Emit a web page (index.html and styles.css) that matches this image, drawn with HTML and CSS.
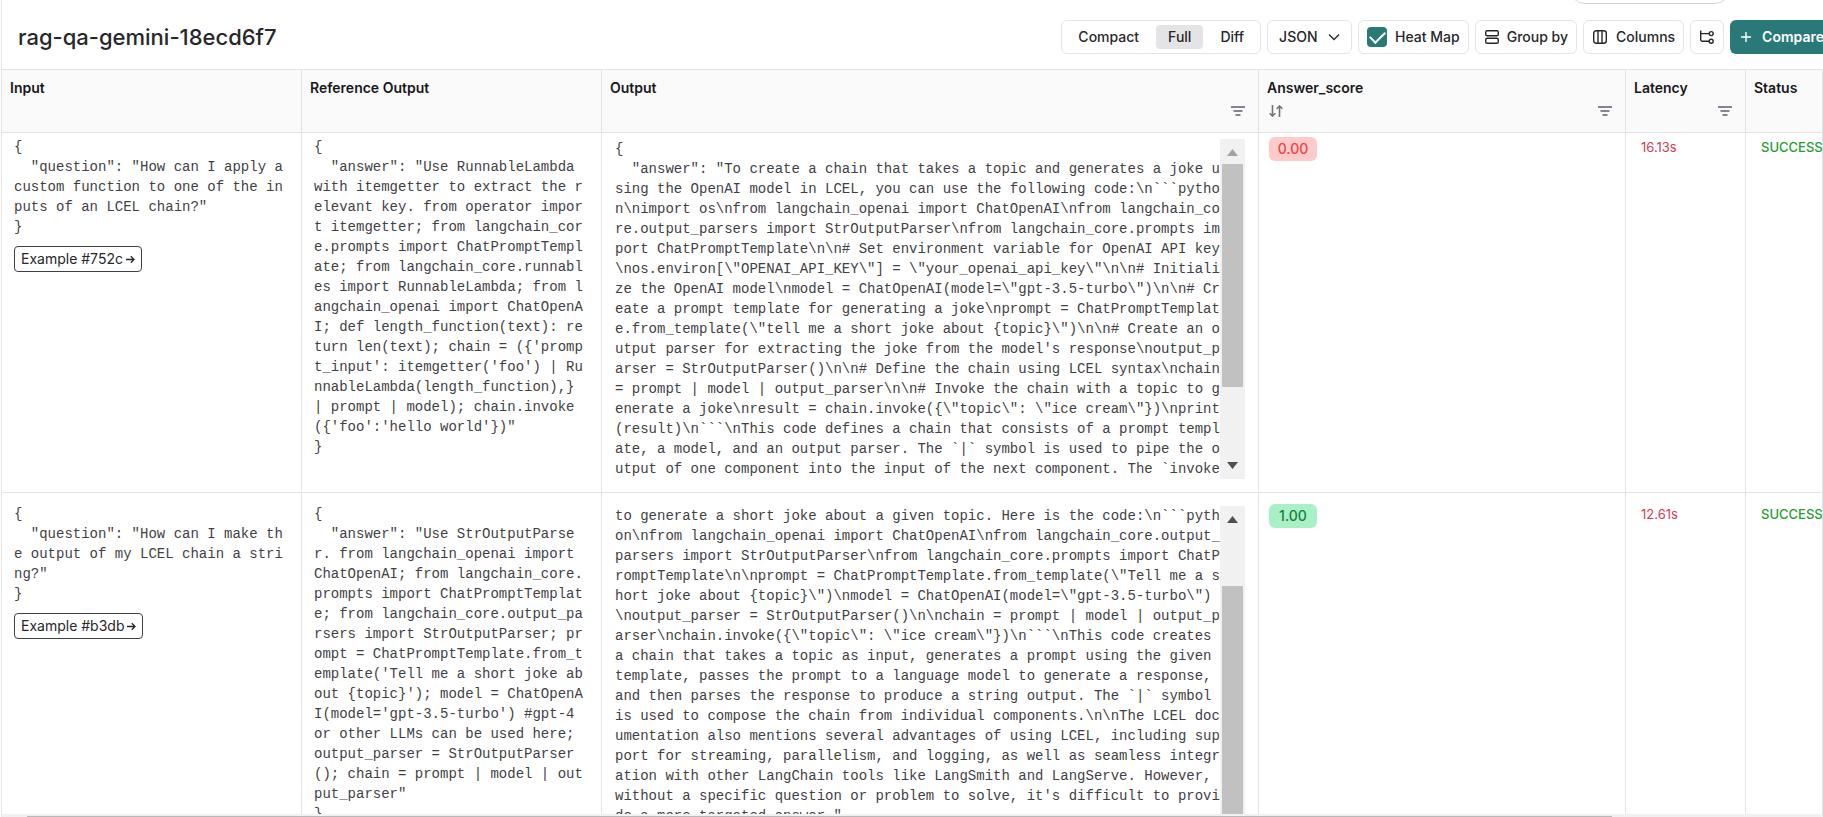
FILE: index.html
```html
<!DOCTYPE html>
<html lang="en">
<head>
<meta charset="utf-8">
<title>rag-qa-gemini-18ecd6f7</title>
<link rel="stylesheet" href="styles.css">
</head>
<body>
<main class="page">
  <div class="topbar"><button class="pill" type="button" aria-label="More"></button></div>
  <header class="header">
    <h1 class="title">rag-qa-gemini-18ecd6f7</h1>
    <div class="toolbar">
      <div class="segmented">
        <button class="segment" type="button">Compact</button>
        <button class="segment segment-active" type="button">Full</button>
        <button class="segment" type="button">Diff</button>
      </div>
      <div class="box select-box">
        <select class="select" aria-label="Format"><option>JSON</option></select>
        <svg class="chevron" width="12" height="8" viewBox="0 0 12 8"><path d="M1 1.5 6 6.5l5-5"/></svg>
      </div>
      <label class="box heat"><input class="check" type="checkbox" checked>Heat Map</label>
      <button class="box group" type="button">
        <svg class="icon" width="16" height="16" viewBox="0 0 16 16"><rect x="1.7" y="1.7" width="12.6" height="5" rx="1.5"/><rect x="1.7" y="9.3" width="12.6" height="5" rx="1.5"/></svg>
        Group by
      </button>
      <button class="box columns" type="button">
        <svg class="icon" width="16" height="16" viewBox="0 0 16 16"><rect x="1.7" y="1.7" width="12.6" height="12.6" rx="2.5"/><path d="M6 1.7v12.6M10 1.7v12.6"/></svg>
        Columns
      </button>
      <button class="box tree" type="button" aria-label="Trace view">
        <svg class="icon" width="16" height="16" viewBox="0 0 16 16"><path d="M1.7 1.5v9.3a1.5 1.5 0 0 0 1.5 1.5H10M1.7 4.6H10"/><circle cx="12.2" cy="4.6" r="2"/><circle cx="12.2" cy="12.2" r="2"/></svg>
      </button>
      <button class="compare" type="button">
        <svg class="plus" width="12" height="12" viewBox="0 0 12 12"><path d="M6 1v10M1 6h10"/></svg>
        Compare
      </button>
    </div>
  </header>
  <div class="table-wrap">
    <table class="table">
      <colgroup><col class="col-text"><col class="col-text"><col><col class="col-score"><col class="col-latency"><col class="col-status"></colgroup>
      <thead>
        <tr>
          <th scope="col">Input</th>
          <th scope="col">Reference Output</th>
          <th scope="col">Output
            <div class="tools"><span></span><button class="tool" type="button" aria-label="Filter output"><svg width="14" height="10" viewBox="0 0 14 10"><path d="M0 1h14M2.500 5h9M4.500 9h5"/></svg></button></div>
          </th>
          <th scope="col">Answer_score
            <div class="tools"><button class="tool" type="button" aria-label="Sort by score"><svg class="sort" width="14" height="12" viewBox="0 0 14 12"><path d="M3.500 0v11M.7 8.200l2.800 2.800 2.800-2.800M10.500 12V1M7.700 3.800 10.500 1l2.800 2.800"/></svg></button><button class="tool" type="button" aria-label="Filter score"><svg width="14" height="10" viewBox="0 0 14 10"><path d="M0 1h14M2.500 5h9M4.500 9h5"/></svg></button></div>
          </th>
          <th scope="col">Latency
            <div class="tools"><span></span><button class="tool" type="button" aria-label="Filter latency"><svg width="14" height="10" viewBox="0 0 14 10"><path d="M0 1h14M2.500 5h9M4.500 9h5"/></svg></button></div>
          </th>
          <th scope="col">Status</th>
        </tr>
      </thead>
      <tbody>
        <tr class="row-first">
          <td><pre class="code">{
  "question": "How can I apply a
custom function to one of the in
puts of an LCEL chain?"
}</pre><a class="example" href="#752c">Example #752c <svg width="9" height="9" viewBox="0 0 9 9"><path d="M0 4.500h8M4.800 1.300 8 4.500 4.800 7.700"/></svg></a></td>
          <td><pre class="code">{
  "answer": "Use RunnableLambda
with itemgetter to extract the r
elevant key. from operator impor
t itemgetter; from langchain_cor
e.prompts import ChatPromptTempl
ate; from langchain_core.runnabl
es import RunnableLambda; from l
angchain_openai import ChatOpenA
I; def length_function(text): re
turn len(text); chain = ({'promp
t_input': itemgetter('foo') | Ru
nnableLambda(length_function),}
| prompt | model); chain.invoke
({'foo':'hello world'})"
}</pre></td>
          <td class="output"><div class="scroller"><pre class="code">{
  "answer": "To create a chain that takes a topic and generates a joke u
sing the OpenAI model in LCEL, you can use the following code:\n```pytho
n\nimport os\nfrom langchain_openai import ChatOpenAI\nfrom langchain_co
re.output_parsers import StrOutputParser\nfrom langchain_core.prompts im
port ChatPromptTemplate\n\n# Set environment variable for OpenAI API key
\nos.environ[\"OPENAI_API_KEY\"] = \"your_openai_api_key\"\n\n# Initiali
ze the OpenAI model\nmodel = ChatOpenAI(model=\"gpt-3.5-turbo\")\n\n# Cr
eate a prompt template for generating a joke\nprompt = ChatPromptTemplat
e.from_template(\"tell me a short joke about {topic}\")\n\n# Create an o
utput parser for extracting the joke from the model's response\noutput_p
arser = StrOutputParser()\n\n# Define the chain using LCEL syntax\nchain
= prompt | model | output_parser\n\n# Invoke the chain with a topic to g
enerate a joke\nresult = chain.invoke({\"topic\": \"ice cream\"})\nprint
(result)\n```\nThis code defines a chain that consists of a prompt templ
ate, a model, and an output parser. The `|` symbol is used to pipe the o
utput of one component into the input of the next component. The `invoke</pre><div class="bar"><svg class="arrow arrow-off" width="11" height="8" viewBox="0 0 11 8"><path d="M0 8 5.500 1 11 8z"/></svg><div class="track"><div class="thumb thumb-start"></div></div><svg class="arrow" width="11" height="8" viewBox="0 0 11 8"><path d="M0 0 5.500 7 11 0z"/></svg></div></div></td>
          <td class="score"><span class="badge badge-low">0.00</span></td>
          <td class="metric latency">16.13s</td>
          <td class="metric status">SUCCESS</td>
        </tr>
        <tr>
          <td><pre class="code">{
  "question": "How can I make th
e output of my LCEL chain a stri
ng?"
}</pre><a class="example" href="#b3db">Example #b3db <svg width="9" height="9" viewBox="0 0 9 9"><path d="M0 4.500h8M4.800 1.300 8 4.500 4.800 7.700"/></svg></a></td>
          <td><pre class="code">{
  "answer": "Use StrOutputParse
r. from langchain_openai import
ChatOpenAI; from langchain_core.
prompts import ChatPromptTemplat
e; from langchain_core.output_pa
rsers import StrOutputParser; pr
ompt = ChatPromptTemplate.from_t
emplate('Tell me a short joke ab
out {topic}'); model = ChatOpenA
I(model='gpt-3.5-turbo') #gpt-4
or other LLMs can be used here;
output_parser = StrOutputParser
(); chain = prompt | model | out
put_parser"
}</pre></td>
          <td class="output"><div class="scroller"><pre class="code">to generate a short joke about a given topic. Here is the code:\n```pyth
on\nfrom langchain_openai import ChatOpenAI\nfrom langchain_core.output_
parsers import StrOutputParser\nfrom langchain_core.prompts import ChatP
romptTemplate\n\nprompt = ChatPromptTemplate.from_template(\"Tell me a s
hort joke about {topic}\")\nmodel = ChatOpenAI(model=\"gpt-3.5-turbo\")
\noutput_parser = StrOutputParser()\n\nchain = prompt | model | output_p
arser\nchain.invoke({\"topic\": \"ice cream\"})\n```\nThis code creates
a chain that takes a topic as input, generates a prompt using the given
template, passes the prompt to a language model to generate a response,
and then parses the response to produce a string output. The `|` symbol
is used to compose the chain from individual components.\n\nThe LCEL doc
umentation also mentions several advantages of using LCEL, including sup
port for streaming, parallelism, and logging, as well as seamless integr
ation with other LangChain tools like LangSmith and LangServe. However,
without a specific question or problem to solve, it's difficult to provi
de a more targeted answer."
}</pre><div class="bar"><svg class="arrow" width="11" height="8" viewBox="0 0 11 8"><path d="M0 8 5.500 1 11 8z"/></svg><div class="track track-end"><div class="thumb thumb-end"></div></div><svg class="arrow arrow-off" width="11" height="8" viewBox="0 0 11 8"><path d="M0 0 5.500 7 11 0z"/></svg></div></div></td>
          <td class="score"><span class="badge badge-high">1.00</span></td>
          <td class="metric latency">12.61s</td>
          <td class="metric status">SUCCESS</td>
        </tr>
      </tbody>
    </table>
  </div>
  <div class="hscroll"><div class="hthumb"></div></div>
</main>
</body>
</html>
```

FILE: styles.css
```css
* { box-sizing: border-box; }
body { margin: 0; background: #fff; color: #27272a; font-family: Inter, sans-serif; font-size: 14px; line-height: 20px; }
button, select, input { font: inherit; color: inherit; margin: 0; }
svg { fill: none; stroke: currentColor; flex: none; display: block; }

.page { height: 100vh; display: flex; flex-direction: column; overflow: hidden; margin-left: 1px; border-left: 1px solid #e4e4e7; }
.topbar { flex: none; height: 4px; display: flex; justify-content: flex-end; align-items: flex-end; overflow: hidden; padding-right: 92px; }
.pill { flex: none; width: 162px; height: 32px; border: 1px solid #d4d4d8; border-radius: 16px; background: #fff; }

.header { flex: none; height: 65px; display: flex; align-items: center; justify-content: space-between; padding: 1px 0 0 16px; }
.title { margin: 0; font-size: 22px; line-height: 32px; font-weight: 500; }
.toolbar { display: flex; gap: 6px; margin-right: -13px; font-weight: 500; }
.segmented, .box { display: flex; align-items: center; height: 34px; border: 1px solid #e4e4e7; border-radius: 6px; background: #fff; }
.segmented { gap: 5px; padding: 0 4px; }
.segment { height: 24px; padding: 0 12px; border: 0; border-radius: 4px; background: none; font-weight: 500; line-height: 24px; }
.segment-active { background: #e4e4e7; }
.box { gap: 8px; padding: 0 8px; font-weight: 500; white-space: nowrap; }
.select-box { gap: 10px; padding: 0 11px; }
.group { gap: 7px; }
.select { appearance: none; border: 0; padding: 0; background: none; }
.check { appearance: none; width: 20px; height: 20px; border-radius: 4px; background: #287977; display: grid; place-items: center; }
.check::after { content: ""; width: 13px; height: 7px; margin-bottom: 4px; border: solid #fff; border-width: 0 0 2px 2px; transform: rotate(-45deg); }
.icon { stroke-width: 1.4; }
.chevron { stroke-width: 1.3; }
.compare { display: flex; align-items: center; gap: 10px; height: 34px; padding: 0 12px 0 10px; border: 0; border-radius: 6px; background: #287977; color: #fff; font-weight: 600; }
.plus { stroke-width: 1.4; }

.table-wrap { flex: 1; min-height: 0; overflow: hidden; border-right: 1px solid #e4e4e7; }
.table { width: 100%; table-layout: fixed; border-collapse: separate; border-spacing: 0; }
.col-text { width: 300px; }
.col-score { width: 367px; }
.col-latency { width: 120px; }
.col-status { width: 76px; }
th { height: 64px; padding: 8px 8px 0; border: solid #e4e4e7; border-width: 1px 1px 1px 0; background: #fafafa; text-align: left; vertical-align: top; font-weight: 600; color: #18181b; }
td { height: 367px; padding: 11px 12px; border: solid #e4e4e7; border-width: 0 1px 1px 0; vertical-align: top; overflow: hidden; }
th:last-child, td:last-child { border-right: 0; }
.row-first td { height: 360px; padding-top: 4px; }
.tools { display: flex; justify-content: space-between; align-items: center; height: 26px; padding: 0 5px 0 2px; color: #85858f; }
.tool { display: block; padding: 0; border: 0; background: none; stroke-width: 2; }
.sort { stroke-width: 1.6; color: #71717a; }

.code { margin: 0; font: 14px/20px "Liberation Mono", monospace; color: #3f3f46; }
.scroller { display: flex; height: 342px; padding-top: 2px; overflow: hidden; }
.scroller .code { flex: 1; min-width: 0; overflow: hidden; padding-left: 1px; }
.output { padding-right: 13px; }
.bar { flex: none; width: 25px; display: flex; flex-direction: column; align-items: center; gap: 8px; padding: 9px 0; background: #f1f1f1; }
.arrow { fill: #505050; stroke: none; }
.arrow-off { fill: #a3a3a3; }
.track { flex: 1; min-height: 0; width: 21px; display: flex; flex-direction: column; }
.track-end { justify-content: flex-end; }
.thumb { background: #c1c1c1; }
.thumb-start { height: 77%; }
.thumb-end { height: 81%; }

.example { display: inline-flex; align-items: center; gap: 3px; height: 26px; margin-top: 9px; padding: 0 6px; border: 1px solid #3f3f46; border-radius: 4px; color: #27272a; text-decoration: none; }
.example svg { stroke-width: 1.3; }
.badge { display: block; width: 48px; height: 24px; border-radius: 6px; line-height: 24px; text-align: center; font-weight: 500; }
.badge-low { background: #fecaca; color: #ef4444; }
.badge-high { background: #aaf0c6; color: #15803d; }
.score { padding-left: 10px; padding-right: 0; }
.metric { padding-left: 15px; padding-right: 0; font-size: 13px; white-space: nowrap; }
.latency { color: #d03a52; }
.status { color: #1f9d2f; font-weight: 500; }

.hscroll { flex: none; height: 3px; padding: 2px 211px 0 25px; background: #f1f1f1; }
.hthumb { height: 1px; background: #b9b9b9; }
```
